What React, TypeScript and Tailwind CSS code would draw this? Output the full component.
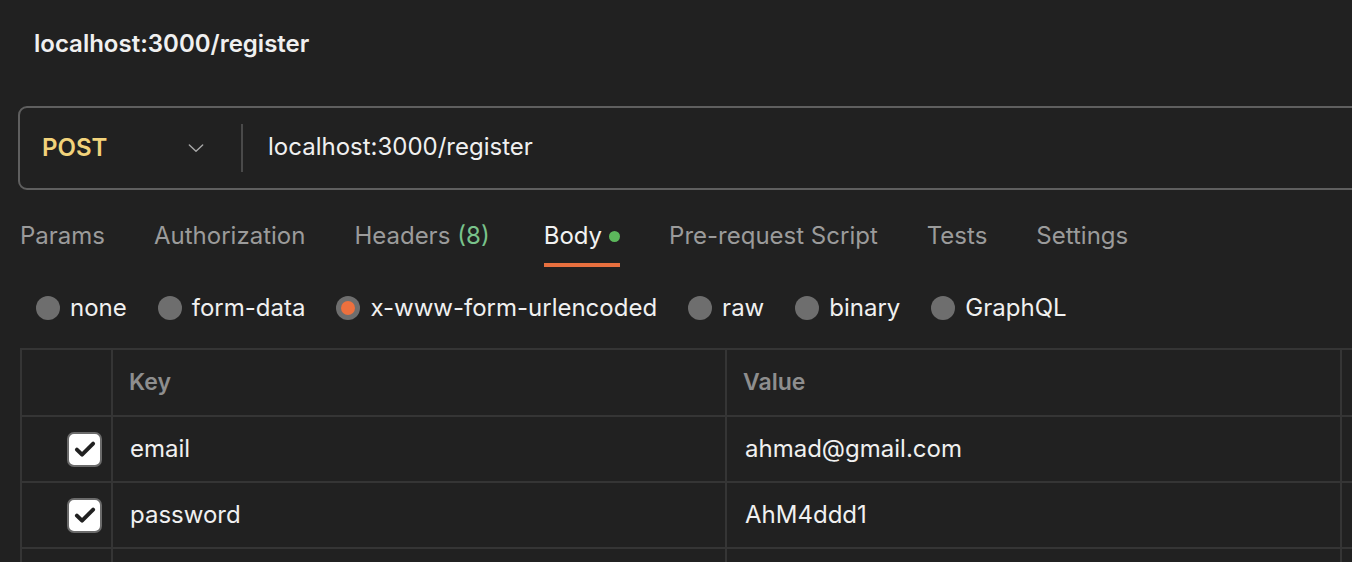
import React from 'react';

const tabs = [
  { label: 'Params' },
  { label: 'Authorization' },
  { label: 'Headers', count: '(8)' },
  { label: 'Body', active: true },
  { label: 'Pre-request Script' },
  { label: 'Tests' },
  { label: 'Settings' },
];

const bodyTypes = ['none', 'form-data', 'x-www-form-urlencoded', 'raw', 'binary', 'GraphQL'];

const rows = [
  { key: 'email', value: 'ahmad@gmail.com' },
  { key: 'password', value: 'AhM4ddd1' },
];

const Checkbox = () => (
  <div className="w-[35px] h-[35px] rounded-[7px] bg-white border-2 border-[#6b6b6b] flex items-center justify-center">
    <svg width="26" height="26" viewBox="0 0 24 24" fill="none" stroke="#212121" strokeWidth={3.6} strokeLinecap="round" strokeLinejoin="round">
      <path d="M4.5 12.5l4.8 4.8L19.5 7" />
    </svg>
  </div>
);

export default function App() {
  return (
    <div
      className="w-[1352px] h-[562px] overflow-hidden bg-[#212121] text-white"
      style={{ fontFamily: 'Inter, "Noto Sans", sans-serif' }}
    >
      <div className="pl-[34px] pt-[29px] h-[106px]">
        <h1 className="text-[24px] font-semibold leading-[30px] text-[#f0f0f0]">localhost:3000/register</h1>
      </div>

      {/* url bar */}
      <div className="ml-[18px] w-[1360px] h-[84px] border-2 border-[#5f5f5f] rounded-[9px] flex items-center">
        <div className="w-[221px] flex items-center justify-between pl-[22px] pr-[35px]">
          <span className="text-[24px] font-semibold text-[#f2d37b]">POST</span>
          <svg width="20" height="20" viewBox="0 0 24 24" fill="none" stroke="#a8a8a8" strokeWidth={1.7} strokeLinecap="round" strokeLinejoin="round">
            <path d="M4 8.5l8 7.5 8-7.5" />
          </svg>
        </div>
        <div className="w-[2px] h-[48px] bg-[#4a4a4a]" />
        <span className="ml-[25px] text-[24px] text-[#f0f0f0] mb-[3px]">localhost:3000/register</span>
      </div>

      {/* tabs */}
      <div className="flex items-start h-[77px] pl-[20px] pt-[31px] gap-[49px]">
        {tabs.map((t) => (
          <div key={t.label} className={`flex flex-col ${t.active ? 'ml-[5px]' : ''}`}>
            <div className="flex items-center gap-[7px] h-[30px]">
              <span className={`text-[24px] leading-[30px] ${t.active ? 'text-[#f2f2f2]' : 'text-[#9b9b9b]'}`}>{t.label}</span>
              {t.count && <span className="text-[24px] leading-[30px] text-[#79c38b]">{t.count}</span>}
              {t.active && <span className="w-[11px] h-[11px] rounded-full bg-[#5cb85c] mt-[1px]" />}
            </div>
            {t.active && <div className="mt-[12px] h-[4px] bg-[#e8703f]" />}
          </div>
        ))}
      </div>

      {/* body types */}
      <div className="flex items-center h-[81px] pl-[36px] gap-[31px]">
        {bodyTypes.map((b) => {
          const on = b === 'x-www-form-urlencoded';
          return (
            <div key={b} className="flex items-center gap-[10px]">
              <span className="w-[24px] h-[24px] rounded-full bg-[#6e6e6e] flex items-center justify-center">
                {on && <span className="w-[14px] h-[14px] rounded-full bg-[#ec703e]" />}
              </span>
              <span className="text-[24px] text-[#f0f0f0]">{b}</span>
            </div>
          );
        })}
      </div>

      {/* table */}
      <div className="ml-[20px] w-[1360px] border-t-2 border-l-2 border-[#353535]">
        <div className="flex h-[67px] border-b-2 border-[#353535]">
          <div className="w-[91px] border-r-2 border-[#353535]" />
          <div className="w-[614px] border-r-2 border-[#353535] flex items-center pl-[16px]">
            <span className="text-[23px] font-semibold text-[#8e8e8e]">Key</span>
          </div>
          <div className="w-[615px] border-r-2 border-[#353535] flex items-center pl-[16px]">
            <span className="text-[23px] font-semibold text-[#8e8e8e]">Value</span>
          </div>
          <div className="flex-1" />
        </div>
        {rows.map((r) => (
          <div key={r.key} className="flex h-[66px] border-b-2 border-[#353535]">
            <div className="w-[91px] border-r-2 border-[#353535] flex items-center justify-end pr-[9px]">
              <Checkbox />
            </div>
            <div className="w-[614px] border-r-2 border-[#353535] flex items-center pl-[17px]">
              <span className="text-[24px] text-[#f0f0f0]">{r.key}</span>
            </div>
            <div className="w-[615px] border-r-2 border-[#353535] flex items-center pl-[18px]">
              <span className="text-[24px] text-[#f0f0f0]">{r.value}</span>
            </div>
            <div className="flex-1" />
          </div>
        ))}
        <div className="flex h-[66px]">
          <div className="w-[91px] border-r-2 border-[#353535]" />
          <div className="w-[614px] border-r-2 border-[#353535]" />
          <div className="w-[615px] border-r-2 border-[#353535]" />
          <div className="flex-1" />
        </div>
      </div>
    </div>
  );
}
